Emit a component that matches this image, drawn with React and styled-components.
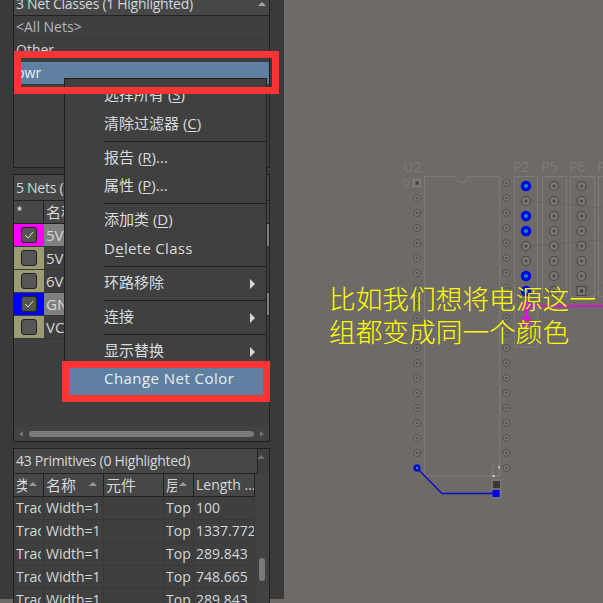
import React from 'react';
import styled, { createGlobalStyle } from 'styled-components';

const GlobalStyle = createGlobalStyle`
  html, body {
    margin: 0;
    padding: 0;
    background: #6e6a68;
  }
  #root {
    width: 603px;
    height: 603px;
    overflow: hidden;
  }
`;

const FONT = `"Open Sans", "Noto Sans CJK SC", sans-serif`;
const CJK = `"Noto Sans CJK SC", sans-serif`;

const Page = styled.div`
  position: relative;
  display: flex;
  width: 603px;
  height: 603px;
  overflow: hidden;
  font-family: ${FONT};
  font-size: 14px;
  color: #d4d8da;
`;

const Sidebar = styled.aside`
  flex: none;
  width: 284px;
  height: 603px;
  box-sizing: border-box;
  padding: 0 14px 0 13px;
  margin-top: -4px;
  background: #3a3a3a;
  display: flex;
  flex-direction: column;
  gap: 6px;
`;

const Panel = styled.section`
  flex: none;
  box-sizing: border-box;
  height: ${(p) => p.$h}px;
  display: flex;
  flex-direction: column;
  background: #3f3f3f;
  border: 1px solid #202020;
  overflow: hidden;
  position: relative;
`;

const PanelHead = styled.div`
  flex: none;
  height: ${(p) => p.$h || 24}px;
  line-height: ${(p) => p.$line || p.$h || 24}px;
  padding-left: 2px;
  font-size: 14px;
  letter-spacing: -0.28px;
  background: #474747;
  border-bottom: 1px solid #222;
  white-space: nowrap;
  ${(p) => p.$narrow && 'width: 241px; border-right: 1px solid #222;'}
`;

const UpArrow = styled.span`
  position: absolute;
  right: ${(p) => p.$r || 3}px;
  top: ${(p) => p.$t || 5}px;
  width: 0;
  height: 0;
  border-left: 4px solid transparent;
  border-right: 4px solid transparent;
  border-bottom: 4px solid ${(p) => p.$color || '#a8a8a8'};
`;

const ClassRow = styled.div`
  height: 23px;
  line-height: 22px;
  padding-left: 2px;
  box-sizing: border-box;
  border-bottom: 1px solid #383838;
  background: ${(p) => (p.$selected ? '#5f80a0' : 'transparent')};
  color: ${(p) => (p.$selected ? '#eef2f5' : '#d4d8da')};
  ${(p) => p.$dim && 'color: #b4b8ba;'}
`;

const NetGrid = styled.div`
  display: grid;
  grid-template-columns: 30px 1fr;
`;

const NetHeadCell = styled.div`
  height: 23px;
  line-height: 21px;
  padding-left: 2px;
  background: #474747;
  border-bottom: 1px solid #222;
  box-sizing: border-box;
  font-family: ${CJK};
  font-size: 15px;
  ${(p) => p.$first && 'border-right: 1px solid #222;'}
`;

const ColorCell = styled.div`
  height: 23px;
  display: flex;
  align-items: center;
  justify-content: center;
  background: ${(p) => p.$color};
  border-bottom: 1px solid #3a3a3a;
  box-sizing: border-box;
`;

const CheckBox = styled.div`
  width: 16px;
  height: 16px;
  box-sizing: border-box;
  border: 1px solid #222;
  border-radius: 3px;
  background: #555;
  display: flex;
  align-items: center;
  justify-content: center;
`;

const NameCell = styled.div`
  height: 23px;
  line-height: 22px;
  padding-left: 2px;
  box-sizing: border-box;
  font-size: 15px;
  white-space: nowrap;
  overflow: hidden;
  border-bottom: 1px solid #383838;
  background: ${(p) => (p.$on ? '#808080' : 'transparent')};
`;

const Filler = styled.div`
  flex: 1;
`;

const HScroll = styled.div`
  flex: none;
  height: 15px;
  display: flex;
  align-items: center;
  gap: 6px;
  padding: 0 5px;
  background: #424242;
`;

const Thumb = styled.div`
  flex: 1;
  height: 6px;
  border-radius: 3px;
  background: #7a7a7a;
`;

const SideArrow = styled.span`
  width: 0;
  height: 0;
  border-top: 3px solid transparent;
  border-bottom: 3px solid transparent;
  ${(p) => (p.$left ? 'border-right' : 'border-left')}: 4px solid #707070;
`;

const PrimBody = styled.div`
  flex: 1;
  display: flex;
  min-height: 0;
`;

const PrimTable = styled.div`
  width: 241px;
  flex: none;
`;

const PrimRow = styled.div`
  display: grid;
  grid-template-columns: 30px 60px 60px 30px 61px;
  height: 23px;
  box-sizing: border-box;
  border-bottom: 1px solid ${(p) => (p.$head ? '#222' : '#383838')};
  background: ${(p) => (p.$head ? '#474747' : 'transparent')};
`;

const PrimCell = styled.div`
  position: relative;
  line-height: 22px;
  padding-left: 2px;
  min-width: 0;
  border-right: 1px solid ${(p) => (p.$head ? '#222' : '#383838')};
`;

const CellText = styled.span`
  display: block;
  overflow: hidden;
  white-space: nowrap;
  width: ${(p) => (p.$w ? `${p.$w}px` : 'auto')};
  ${(p) => p.$cjk && `font-family: ${CJK}; font-size: 15px;`}
`;

const SortMark = styled.span`
  position: absolute;
  right: 6px;
  top: 8px;
  width: 0;
  height: 0;
  border-left: 4px solid transparent;
  border-right: 4px solid transparent;
  border-bottom: 4px solid #999;
`;

const VScroll = styled.div`
  flex: 1;
  position: relative;
  background: #424242;
`;

const VThumb = styled.div`
  position: absolute;
  left: 4px;
  top: 84px;
  width: 6px;
  height: 23px;
  border-radius: 3px;
  background: #7a7a7a;
`;

const Menu = styled.div`
  position: absolute;
  left: 64px;
  top: 78px;
  width: 203px;
  height: 324px;
  box-sizing: border-box;
  padding-top: 3px;
  background: #404040;
  border: 1px solid #202020;
  font-size: 15px;
  color: #d8dcde;
`;

const MenuItem = styled.div`
  position: relative;
  height: 28.5px;
  line-height: 25px;
  padding-left: 39px;
  white-space: nowrap;
  letter-spacing: ${(p) => p.$spacing || 0}px;
  ${(p) => p.$active && 'background: #5f80a0; color: #e8eef2;'}
`;

const MenuSep = styled.div`
  height: 1px;
  margin: 1.5px 0 3px 39px;
  background: #222;
`;

const SubArrow = styled.span`
  position: absolute;
  right: 11px;
  top: 9px;
  width: 0;
  height: 0;
  border-top: 5px solid transparent;
  border-bottom: 5px solid transparent;
  border-left: 5px solid #d8d8d8;
`;

const Key = styled.span`
  text-decoration: underline;
  text-underline-offset: 2px;
`;

const RedBox = styled.div`
  position: absolute;
  box-sizing: border-box;
  left: ${(p) => p.$x}px;
  top: ${(p) => p.$y}px;
  width: ${(p) => p.$w}px;
  height: ${(p) => p.$h}px;
  border: 7px solid #fb3434;
`;

const Canvas = styled.main`
  flex: 1;
  position: relative;
  background: #6e6a68;
  overflow: hidden;
`;

const Board = styled.svg`
  display: block;
  width: 319px;
  height: 603px;
`;

const Caption = styled.div`
  position: absolute;
  left: 45px;
  top: 281px;
  width: 280px;
  font-family: ${CJK};
  font-size: 26.7px;
  font-weight: 300;
  line-height: 33px;
  color: #ffff00;
  white-space: nowrap;
`;

const Check = () => (
  <svg width="10" height="10" viewBox="0 0 10 10">
    <path d="M1 5 L4 8 L9 2" fill="none" stroke="#d8d8d8" strokeWidth="1" />
  </svg>
);

const Pad = ({ x, y }) => (
  <g>
    <circle cx={x} cy={y} r="3.4" fill="#767270" stroke="#454341" strokeWidth="1" strokeDasharray="1.6 .7" />
    <circle cx={x} cy={y} r="1.1" fill="#484848" />
  </g>
);

const BigPad = ({ x, y }) => (
  <g>
    <circle cx={x} cy={y} r="4.5" fill="#7a7674" stroke="#4a4846" strokeWidth="1.2" />
    <circle cx={x} cy={y} r="1.5" fill="#464646" />
  </g>
);

const BluePad = ({ x, y }) => (
  <g>
    <circle cx={x} cy={y} r="5.2" fill="#0000f0" />
    <circle cx={x} cy={y} r="2" fill="#009aa0" />
  </g>
);

const range = (n, start = 183, step = 15) => Array.from({ length: n }, (_, i) => start + i * step);

const nets = [
  { color: '#ff00ff', name: '5V', on: true },
  { color: '#9c9c74', name: '5V' },
  { color: '#9c9c74', name: '6V' },
  { color: '#0000ff', name: 'GND', on: true },
  { color: '#9c9c74', name: 'VCC' },
];

const prims = ['100', '1337.772', '289.843', '748.665', '289.843'];

const Pcb = () => (
  <Board viewBox="284 0 319 603">
    <g fill="none" stroke="#7e7a78" strokeWidth="1.1">
      <path d="M424.5 176.5 H455.5 A6 6 0 0 0 467.5 176.5 H499.5 V476 H424.5 Z" />
      <rect x="514.5" y="176.5" width="23" height="170.5" />
      <rect x="542.5" y="176.5" width="24" height="120" />
      <rect x="570.5" y="176.5" width="24" height="120" />
      <rect x="598.5" y="176.5" width="24" height="120" />
      <rect x="492.5" y="465" width="7" height="11" />
      <rect x="492" y="480" width="9" height="18" />
    </g>
    <g fill="none" stroke="#63605e" strokeWidth="0.7">
      <path d="M530 201 L560 204 L603 208" />
      <path d="M530 246 L580 242 L603 240" />
      <path d="M526 246 V306" />
      <path d="M530 330 L560 316 L603 285" />
    </g>
    <g fontFamily={FONT} fontSize="14" fill="#7f7c7a">
      <text x="403" y="172">U2</text>
      <text x="513" y="172">P2</text>
      <text x="541" y="172">P5</text>
      <text x="569" y="172">P6</text>
      <text x="597" y="172">P7</text>
    </g>
    <circle cx="406" cy="183" r="3" fill="none" stroke="#7e7a78" />
    <rect x="413.5" y="179.5" width="7" height="7" fill="none" stroke="#8a8785" />
    <rect x="416" y="182" width="2.4" height="2.4" fill="#3a3a3a" />
    {range(19, 198).map((y) => <Pad key={`l${y}`} x={417} y={y} />)}
    {range(20).map((y) => <Pad key={`r${y}`} x={506.5} y={y} />)}
    {[201, 246, 261].map((y) => <BigPad key={`a${y}`} x={526} y={y} />)}
    {[186, 216, 231, 276, 291].map((y) => <BluePad key={`b${y}`} x={526} y={y} />)}
    {range(8, 186).map((y) => <BigPad key={`c${y}`} x={554} y={y} />)}
    {range(7, 186).map((y) => <BigPad key={`d${y}`} x={581.5} y={y} />)}
    <rect x="577" y="286.5" width="9" height="9" fill="#7a7674" stroke="#4a4846" strokeWidth="1.2" />
    <rect x="580" y="289.5" width="3" height="3" fill="#3a3a3a" />
    <path d="M526 306 H603 M526 306 V321" stroke="#f000f0" strokeWidth="1.6" fill="none" />
    <circle cx="526" cy="306" r="4" fill="none" stroke="#f000f0" strokeWidth="1.6" />
    <circle cx="526" cy="321" r="4" fill="none" stroke="#f000f0" strokeWidth="2" />
    <path d="M417 468 L442 493.5 H496" fill="none" stroke="#0a0ac8" strokeWidth="1.3" />
    <circle cx="417" cy="468" r="3.4" fill="#0000f0" />
    <circle cx="417" cy="468" r="1.2" fill="#009aa0" />
    <rect x="493" y="481" width="7" height="7" fill="#383838" />
    <rect x="492.5" y="490" width="7" height="7" fill="#0000f0" />
    <rect x="498" y="466.5" width="2" height="2" fill="#d8d0b8" />
    <rect x="492.5" y="475" width="2" height="2" fill="#d8d0b8" />
  </Board>
);

export default function App() {
  return (
    <Page>
      <GlobalStyle />
      <Sidebar>
        <Panel $h={172}>
          <PanelHead $h={18} $line={14}>3 Net Classes (1 Highlighted)</PanelHead>
          <UpArrow />
          <ClassRow $dim>&lt;All Nets&gt;</ClassRow>
          <ClassRow>Other</ClassRow>
          <ClassRow $selected>pwr</ClassRow>
        </Panel>
        <Panel $h={268}>
          <PanelHead $h={25}>5 Nets (2 Highlighted)</PanelHead>
          <NetGrid>
            <NetHeadCell $first>*</NetHeadCell>
            <NetHeadCell>名称</NetHeadCell>
            {nets.map((n, i) => (
              <React.Fragment key={i}>
                <ColorCell $color={n.color}>
                  <CheckBox>{n.on && <Check />}</CheckBox>
                </ColorCell>
                <NameCell $on={n.on}>{n.name}</NameCell>
              </React.Fragment>
            ))}
          </NetGrid>
          <Filler />
          <HScroll>
            <SideArrow $left />
            <Thumb />
            <SideArrow />
          </HScroll>
        </Panel>
        <Panel $h={170}>
          <PanelHead $narrow $h={24}>43 Primitives (0 Highlighted)</PanelHead>
          <UpArrow $r={4} $t={6} $color="#707070" />
          <PrimBody>
            <PrimTable>
              <PrimRow $head>
                <PrimCell $head><CellText $cjk $w={11}>类型</CellText><SortMark /></PrimCell>
                <PrimCell $head><CellText $cjk>名称</CellText><SortMark /></PrimCell>
                <PrimCell $head><CellText $cjk>元件</CellText></PrimCell>
                <PrimCell $head><CellText $cjk $w={11}>层</CellText><SortMark /></PrimCell>
                <PrimCell $head><CellText>Length ...</CellText></PrimCell>
              </PrimRow>
              {prims.map((len, i) => (
                <PrimRow key={i}>
                  <PrimCell><CellText $w={25}>Track</CellText></PrimCell>
                  <PrimCell><CellText $w={55}>Width=10</CellText></PrimCell>
                  <PrimCell />
                  <PrimCell><CellText>Top</CellText></PrimCell>
                  <PrimCell><CellText>{len}</CellText></PrimCell>
                </PrimRow>
              ))}
            </PrimTable>
            <VScroll>
              <VThumb />
            </VScroll>
          </PrimBody>
        </Panel>
      </Sidebar>
      <Canvas>
        <Pcb />
        <Caption>
          比如我们想将电源这一
          <br />
          组都变成同一个颜色
        </Caption>
      </Canvas>
      <Menu>
        <MenuItem>选择所有 (<Key>S</Key>)</MenuItem>
        <MenuItem>清除过滤器 (<Key>C</Key>)</MenuItem>
        <MenuSep />
        <MenuItem>报告 (<Key>R</Key>)...</MenuItem>
        <MenuItem>属性 (<Key>P</Key>)...</MenuItem>
        <MenuSep />
        <MenuItem>添加类 (<Key>D</Key>)</MenuItem>
        <MenuItem $spacing={0.3}>D<Key>e</Key>lete Class</MenuItem>
        <MenuSep />
        <MenuItem>环路移除<SubArrow /></MenuItem>
        <MenuSep />
        <MenuItem>连接<SubArrow /></MenuItem>
        <MenuSep />
        <MenuItem>显示替换<SubArrow /></MenuItem>
        <MenuItem $active $spacing={0.45}>Change Net Color</MenuItem>
      </Menu>
      <RedBox $x={14} $y={51} $w={265} $h={43} />
      <RedBox $x={62} $y={361} $w={208} $h={41} />
    </Page>
  );
}
